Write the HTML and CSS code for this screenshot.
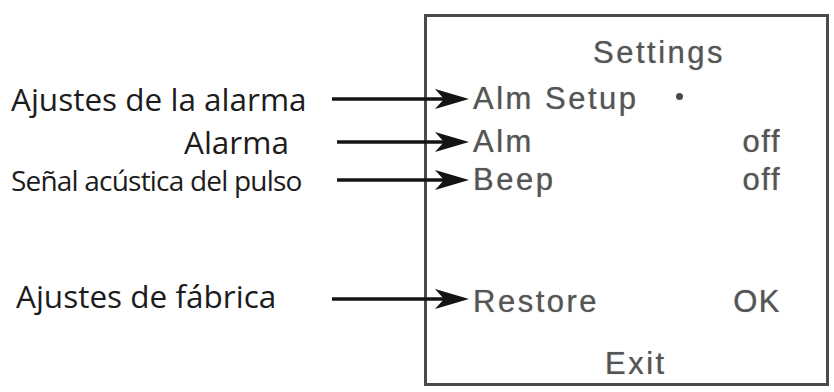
FILE: index.html
```html
<!DOCTYPE html>
<html lang="es">
<head>
<meta charset="utf-8">
<title>Settings</title>
<link rel="stylesheet" href="styles.css">
</head>
<body>
<div class="figure">
  <div class="screen"></div>

  <div class="scr-title">Settings</div>

  <div class="label label-r1">Ajustes de la alarma</div>
  <svg class="arrow arrow-r1" viewBox="0 0 141 24" width="141" height="24"><line x1="0" y1="12" x2="112" y2="12"/><path d="M137 12 L103 2 L112 12 L103 22 Z"/></svg>
  <div class="item item-r1">Alm Setup<span class="dot"></span></div>

  <div class="label label-r2 label-alarma">Alarma</div>
  <svg class="arrow arrow-r2" viewBox="0 0 141 24" width="141" height="24"><line x1="5" y1="12" x2="112" y2="12"/><path d="M137 12 L103 2 L112 12 L103 22 Z"/></svg>
  <div class="item item-r2">Alm</div>
  <div class="value value-r2">off</div>

  <div class="label label-r3 label-senal">Señal acústica del pulso</div>
  <svg class="arrow arrow-r3" viewBox="0 0 141 24" width="141" height="24"><line x1="5" y1="12" x2="112" y2="12"/><path d="M137 12 L103 2 L112 12 L103 22 Z"/></svg>
  <div class="item item-r3">Beep</div>
  <div class="value value-r3">off</div>

  <div class="label label-r4 label-fabrica">Ajustes de fábrica</div>
  <svg class="arrow arrow-r4" viewBox="0 0 141 24" width="141" height="24"><line x1="0" y1="12" x2="112" y2="12"/><path d="M137 12 L103 2 L112 12 L103 22 Z"/></svg>
  <div class="item item-r4">Restore</div>
  <div class="value value-r4">OK</div>

  <div class="scr-exit">Exit</div>
</div>
</body>
</html>
```
FILE: styles.css
```css
html, body {
  margin: 0;
  padding: 0;
  background: #ffffff;
}

.figure {
  display: grid;
  width: 829px;
  grid-template-columns: 332px 92px 49px 260px 47px 49px;
  grid-template-rows: 14px 21px 36px 10px 36px 7px 36px 2px 36px 86px 36px 26px 36px 4px;
}

.screen {
  grid-column: 3 / 7;
  grid-row: 2 / 15;
  border: 3px solid #4a4a4a;
  background: #ffffff;
}

.scr-title,
.item,
.value,
.scr-exit {
  font-family: "Liberation Sans", Arial, sans-serif;
  font-size: 31px;
  letter-spacing: 2.5px;
  line-height: 36px;
  color: #555555;
  text-shadow: 0 0 1px rgba(60, 60, 60, 0.55);
  white-space: nowrap;
}

.scr-title {
  grid-column: 4 / 6;
  grid-row: 3;
  padding-left: 120px;
}

.scr-exit {
  grid-column: 4 / 6;
  grid-row: 13;
  padding-left: 132px;
}

.item {
  grid-column: 4 / 5;
}

.value {
  grid-column: 5 / 6;
  text-align: right;
  letter-spacing: 1.5px;
  margin-right: -1px;
}

.dot {
  display: inline-block;
  width: 7px;
  height: 7px;
  border-radius: 50%;
  background: #4a4a4a;
  margin-left: 37px;
  vertical-align: 9px;
}

.label {
  grid-column: 1 / 2;
  font-family: "Open Sans", Lato, sans-serif;
  font-size: 31.5px;
  line-height: 36px;
  color: #1c1c1c;
  white-space: nowrap;
  padding-left: 11px;
}

.label-alarma {
  padding-left: 184px;
}

.label-senal {
  font-size: 28px;
  letter-spacing: -0.8px;
  padding-left: 11px;
}

.label-fabrica {
  padding-left: 16px;
  margin-top: -6px;
}

.arrow {
  grid-column: 2 / 4;
  align-self: center;
  display: block;
}

.arrow line {
  stroke: #141414;
  stroke-width: 3.5;
}

.arrow path {
  fill: #141414;
}

.label-r1, .arrow-r1, .item-r1 { grid-row: 5; }
.label-r2, .arrow-r2, .item-r2, .value-r2 { grid-row: 7; }
.label-r3, .arrow-r3, .item-r3, .value-r3 { grid-row: 9; }
.label-r4, .arrow-r4, .item-r4, .value-r4 { grid-row: 11; }

.arrow-r4 {
  margin-top: -6px;
}
```
